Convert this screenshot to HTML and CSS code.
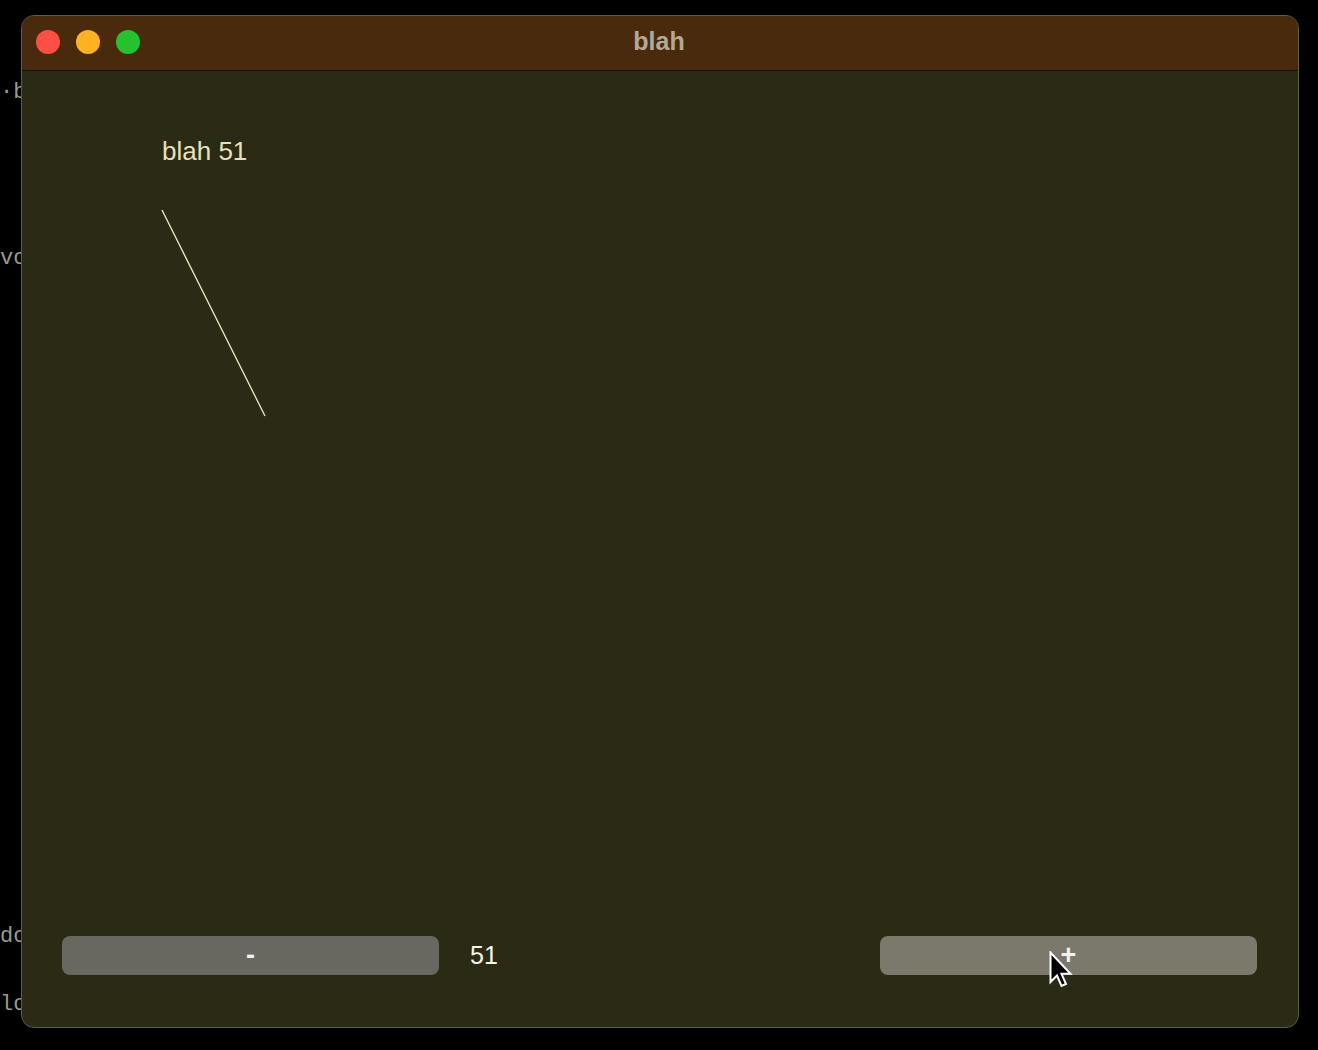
FILE: index.html
```html
<!DOCTYPE html>
<html>
<head>
<meta charset="utf-8">
<title>blah</title>
<link rel="stylesheet" href="styles.css">
</head>
<body>
<div class="backdrop">
  <span class="term t1">·b</span>
  <span class="term t2">vo</span>
  <span class="term t3">do</span>
  <span class="term t4">lo</span>
</div>
<div class="window">
  <div class="titlebar">
    <div class="lights">
      <span class="light red"></span>
      <span class="light yellow"></span>
      <span class="light green"></span>
    </div>
    <div class="title">blah</div>
  </div>
  <div class="content">
    <div class="canvas">
      <div class="label">blah 51</div>
      <svg class="stroke" width="106" height="210" viewBox="0 0 106 210">
        <line x1="1" y1="1" x2="104" y2="207" stroke="#e9e4c2" stroke-width="1.4"/>
      </svg>
    </div>
    <div class="controls">
      <button class="btn minus">-</button>
      <span class="count">51</span>
      <div class="spacer"></div>
      <button class="btn plus">+</button>
    </div>
  </div>
</div>
<svg class="cursor" width="26" height="38" viewBox="0 0 26 38">
  <path d="M1.5 1.5 L1.5 31 L8 24.5 L12.5 35 L17 33 L12.5 22.8 L21.5 22.8 Z" fill="#000" stroke="#fff" stroke-width="2" stroke-linejoin="miter"/>
</svg>
</body>
</html>
```

FILE: styles.css
```css
html, body {
  margin: 0;
  padding: 0;
  background: #000;
  width: 1318px;
  height: 1050px;
  overflow: hidden;
}

body {
  position: relative;
  padding: 15px 0 0 21px;
  box-sizing: border-box;
  font-family: "Liberation Sans", Arial, sans-serif;
}

.backdrop {
  position: absolute;
  left: 0;
  top: 0;
  width: 40px;
  height: 1050px;
  z-index: 0;
}

.term {
  position: absolute;
  left: 0;
  font-family: "Liberation Mono", "DejaVu Sans Mono", monospace;
  font-size: 22px;
  line-height: 26px;
  color: #9d9b86;
  white-space: pre;
}
.t1 { top: 80px; }
.t2 { top: 246px; }
.t3 { top: 924px; }
.t4 { top: 992px; }

.window {
  position: relative;
  z-index: 1;
  width: 1278px;
  height: 1013px;
  box-sizing: border-box;
  border: 1px solid #5f5c42;
  border-radius: 13px;
  background: #2b2a14;
  overflow: hidden;
  display: flex;
  flex-direction: column;
}

.titlebar {
  height: 54px;
  flex: none;
  background: #4a2a0d;
  border-bottom: 1px solid #14130a;
  display: flex;
  align-items: center;
  position: relative;
}

.lights {
  display: flex;
  gap: 16px;
  padding-left: 14px;
  margin-top: -2px;
}

.light {
  width: 24px;
  height: 24px;
  border-radius: 50%;
  display: block;
}
.red { background: #fe4f45; }
.yellow { background: #feb121; }
.green { background: #24c22f; }

.title {
  position: absolute;
  left: 0;
  right: 0;
  top: 0;
  bottom: 0;
  display: flex;
  align-items: center;
  justify-content: center;
  font-weight: bold;
  font-size: 25px;
  color: #b2aa98;
  padding-right: 2px;
  padding-bottom: 4px;
}

.content {
  flex: 1;
  display: flex;
  flex-direction: column;
  padding: 0 41px 52px 40px;
}

.canvas {
  flex: 1;
  padding-left: 100px;
  padding-top: 65px;
  display: flex;
  flex-direction: column;
  align-items: flex-start;
}

.label {
  font-size: 26px;
  line-height: 30px;
  color: #e6e0bd;
}

.stroke {
  display: block;
  margin-top: 43px;
  margin-left: -1px;
}

.controls {
  display: flex;
  align-items: center;
  height: 39px;
}

.btn {
  width: 377px;
  height: 39px;
  border: none;
  border-radius: 8px;
  font-family: "Liberation Sans", Arial, sans-serif;
  font-size: 27px;
  font-weight: bold;
  color: #f4f2ea;
  padding: 0;
  line-height: 39px;
}
.minus { background: #686860; }
.plus { background: #7a796c; }

.count {
  margin-left: 31px;
  font-size: 25px;
  color: #f6f4ec;
}

.spacer { flex: 1; }

.cursor {
  position: absolute;
  left: 1049px;
  top: 951px;
  z-index: 5;
}
```
